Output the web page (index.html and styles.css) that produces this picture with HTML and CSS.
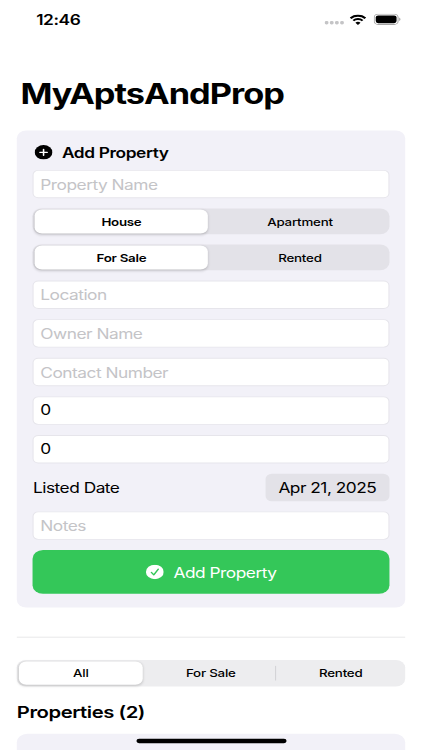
FILE: index.html
```
<!DOCTYPE html>
<html lang="en">
<head>
<meta charset="UTF-8">
<meta name="viewport" content="width=device-width, initial-scale=1.0">
<link rel="stylesheet" href="styles.css">
<title>MyAptsAndProp</title>
</head>
<body>
<div class="screen">
  <div class="status-bar">
    <span class="time">12:46</span>
    <div class="status-icons">
      <svg class="dots" width="19" height="5" viewBox="0 0 19 5" fill="#c4c4c6">
        <rect x="0.3" y="0.5" width="3.6" height="4" rx="1.6"/>
        <rect x="5.2" y="0.5" width="3.6" height="4" rx="1.6"/>
        <rect x="10.1" y="0.5" width="3.6" height="4" rx="1.6"/>
        <rect x="15" y="0.5" width="3.6" height="4" rx="1.6"/>
      </svg>
      <svg class="wifi" width="16" height="12" viewBox="0 0 17 12" preserveAspectRatio="none">
        <path d="M1 4.2 C5.2 0.2 11.8 0.2 16 4.2" fill="none" stroke="#000" stroke-width="2.4"/>
        <path d="M3.8 7 C6.4 4.5 10.6 4.5 13.2 7" fill="none" stroke="#000" stroke-width="2.2"/>
        <path d="M8.5 12 L5.9 9.4 C7.3 8 9.7 8 11.1 9.4 Z"/>
      </svg>
      <svg class="battery" width="26" height="13" viewBox="0 0 27 13" preserveAspectRatio="none">
        <rect x="0.5" y="0.5" width="23.6" height="12" rx="3.8" fill="none" stroke="#a5a5a5"/>
        <rect x="2" y="2" width="20.6" height="9" rx="2.4"/>
        <path d="M25.2 4.5 C26.9 5.2 26.9 7.8 25.2 8.5 Z" fill="#a0a0a0"/>
      </svg>
    </div>
  </div>

  <h1>MyAptsAndProp</h1>

  <div class="card">
    <div class="card-header">
      <svg width="17" height="17" viewBox="0 0 17 17">
        <circle cx="8.5" cy="8.5" r="8.5"/>
        <path d="M8.5 5 V12 M5 8.5 H12" stroke="#fff" stroke-width="1.5" stroke-linecap="round"/>
      </svg>
      <span>Add Property</span>
    </div>
    <input class="field" type="text" placeholder="Property Name">
    <div class="segmented">
      <div class="segment selected">House</div>
      <div class="segment">Apartment</div>
    </div>
    <div class="segmented">
      <div class="segment selected">For Sale</div>
      <div class="segment">Rented</div>
    </div>
    <input class="field" type="text" placeholder="Location">
    <input class="field" type="text" placeholder="Owner Name">
    <input class="field" type="text" placeholder="Contact Number">
    <input class="field" type="text" value="0">
    <input class="field" type="text" value="0">
    <div class="date-row">
      <span>Listed Date</span>
      <span class="date">Apr 21, 2025</span>
    </div>
    <input class="field" type="text" placeholder="Notes">
    <button class="add-button">
      <svg width="17" height="17" viewBox="0 0 17 17">
        <circle cx="8.5" cy="8.5" r="8.5" fill="#fff"/>
        <path d="M5.2 9.1 L7.5 11.9 L11.8 5.3" fill="none" stroke="#34c759" stroke-width="1.4" stroke-linecap="round" stroke-linejoin="round"/>
      </svg>
      <span>Add Property</span>
    </button>
  </div>

  <div class="divider"></div>

  <div class="segmented filter">
    <div class="segment selected">All</div>
    <div class="segment">For Sale</div>
    <div class="segment separated">Rented</div>
  </div>

  <h2>Properties (2)</h2>
  <div class="property-card"></div>
  <div class="home-indicator"></div>
</div>
</body>
</html>
```

FILE: styles.css
```
* {
  box-sizing: border-box;
}
html {
  height: 750px;
  overflow: hidden;
}
body {
  margin: 0;
  width: 422px;
  height: 750px;
  overflow: hidden;
  background: #fff;
}
/* 402x874 phone screen, fitted to the window */
.screen {
  position: relative;
  display: flex;
  flex-direction: column;
  width: 402px;
  height: 874px;
  margin-bottom: -124px;
  overflow: hidden;
  transform: scale(1.04975, 0.85812);
  transform-origin: 0 0;
  font-family: Inter, "Liberation Sans", sans-serif;
  font-size: 16.5px;
  letter-spacing: -0.48px;
  color: #000;
}
.status-bar {
  display: flex;
  flex-shrink: 0;
  justify-content: space-between;
  height: 45px;
  align-items: center;
  padding: 0 20.5px 0 34.5px;
}
.time {
  font-size: 16.5px;
  font-weight: 600;
  letter-spacing: -0.4px;
}
.status-icons {
  display: flex;
  align-items: center;
}
.dots {
  margin-top: 8px;
}
.wifi {
  margin-left: 5.5px;
}
.battery {
  margin-left: 6.5px;
}
h1 {
  margin: 44.4px 0 0 19.5px;
  font-size: 32.7px;
  line-height: 41px;
  font-weight: 700;
  letter-spacing: -0.93px;
}
.card {
  display: flex;
  flex-direction: column;
  flex-shrink: 0;
  gap: 12px;
  margin: 21.9px 16px 0;
  padding: 15.5px 15.4px;
  border-radius: 9px;
  background: #f2f1f8;
}
.card-header {
  display: flex;
  align-items: center;
  gap: 9.2px;
  height: 18.4px;
  padding: 1.5px 0 0 1.4px;
  font-weight: 600;
  letter-spacing: -0.38px;
}
.field {
  width: 100%;
  height: 32.9px;
  padding: 0.5px 6px 0;
  border: 1px solid #e6e5eb;
  border-radius: 5.5px;
  background: #fff;
  font: inherit;
  letter-spacing: inherit;
  color: #000;
}
.field::placeholder {
  color: #c4c4c7;
  opacity: 1;
}
.segmented {
  display: flex;
  flex-shrink: 0;
  height: 30.8px;
  margin: -0.4px 0;
  padding: 1.7px 0;
  border-radius: 9px;
  background: #e3e2e8;
}
.segment {
  flex: 1;
  display: flex;
  align-items: center;
  justify-content: center;
  font-size: 12.7px;
  font-weight: 500;
  letter-spacing: -0.2px;
}
.segment.selected {
  flex: 0 0 165px;
  margin: 0 2.7px 0 1.8px;
  border-radius: 7px;
  background: #fff;
  box-shadow: 0 1px 3px rgba(0, 0, 0, 0.18);
  font-weight: 600;
  letter-spacing: -0.25px;
}
.date-row {
  display: flex;
  align-items: center;
  justify-content: space-between;
  height: 32.9px;
}
.date {
  display: flex;
  align-items: center;
  justify-content: center;
  width: 117.5px;
  height: 32.9px;
  border-radius: 6px;
  background: #e3e2e8;
}
.add-button {
  display: flex;
  align-items: center;
  justify-content: center;
  gap: 9.6px;
  height: 51px;
  border: none;
  border-radius: 10px;
  background: #34c759;
  color: #fff;
  font: inherit;
  letter-spacing: inherit;
}
.divider {
  flex-shrink: 0;
  height: 1px;
  margin: 34.4px 16px 0;
  background: #e4e4e6;
}
.filter {
  margin: 25.6px 16px 0;
  background: #ededef;
}
.filter .selected {
  flex: 0 0 118.3px;
  margin-right: 3.3px;
  font-weight: 500;
  letter-spacing: -0.2px;
}
.separated {
  border-left: 1px solid #d3d3d6;
  height: 17px;
  margin-top: 5px;
}
h2 {
  margin: 18.2px 16px 0;
  font-size: 19.3px;
  line-height: 24px;
  font-weight: 600;
  letter-spacing: -0.42px;
}
.property-card {
  flex: 1;
  margin: 13.3px 16px 0;
  border-radius: 10px 10px 0 0;
  background: #f2f1f8;
}
.home-indicator {
  position: absolute;
  left: 129.5px;
  top: 861px;
  width: 143.5px;
  height: 5px;
  border-radius: 3px;
  background: #000;
}
```
